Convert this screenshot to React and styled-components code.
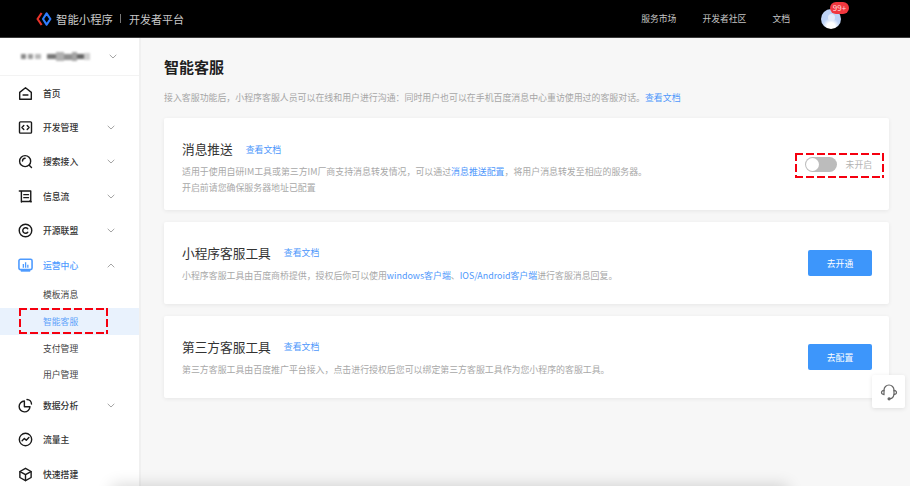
import React from 'react'
import styled, { createGlobalStyle } from 'styled-components'

const GlobalStyle = createGlobalStyle`
  html, body { margin: 0; padding: 0; height: 100%; overflow: hidden; background: #f7f7f7; }
  body { font-family: "Noto Sans CJK SC", "Liberation Sans", sans-serif; }
  * { box-sizing: border-box; }
`

const Ico = ({ children, color = '#1a1a1a', size = 15 }) => (
  <svg width={size} height={size} viewBox="0 0 16 16" fill="none" stroke={color} strokeWidth="1.5" strokeLinecap="round" strokeLinejoin="round">
    {children}
  </svg>
)

const Chevron = ({ up }) => (
  <svg width="8" height="5" viewBox="0 0 8 5" fill="none" stroke="#9a9a9a" strokeWidth="0.9">
    <path d={up ? 'M0.7 4.3 4 1l3.3 3.3' : 'M0.7 0.8 4 4l3.3-3.2'} />
  </svg>
)

const icons = {
  home: <><path d="M1.8 6.8 8 1.8l6.2 5v7.4H1.8z" /><path d="M5.4 9.6h5.2" /></>,
  dev: <><rect x="1.6" y="2" width="12.8" height="12" rx="1" /><path d="M6.2 5.8 4.2 8l2 2.2M9.8 5.8l2 2.2-2 2.2" /></>,
  search: <><circle cx="7.6" cy="7.6" r="5.9" /><path d="M4.8 7.4A2.9 2.9 0 0 1 7.6 4.6M12 12l2.4 2.4" /></>,
  feed: <><path d="M1.4 2.2h2.2v11.6M3.6 2.2h10v11.4" /><path d="M6.2 6h5M6.2 9.2h5M3.8 13.4h8.6" /><path d="M12.8 12.4l1.2 1.2" /></>,
  union: <><circle cx="8" cy="8" r="6.7" /><path d="M10.4 6.1A3 3 0 1 0 10.4 9.9" /></>,
  data: <><path d="M6.8 3.2a5.8 5.8 0 1 0 6 6.2H6.8z" /><path d="M9.6 1.6a5 5 0 0 1 4.8 4.8" /></>,
  flow: <><circle cx="8" cy="8" r="6.6" /><path d="M4.4 9.4 6.8 6.8l2 2 2.8-3" /></>,
  box: <><path d="M8 1.4 14 4.8v6.4L8 14.6l-6-3.4V4.8z" /><path d="M2.2 5 8 8.2 13.8 5M8 8.2v6.2" /></>
}

const OpsIcon = () => (
  <svg width="15" height="15" viewBox="0 0 16 16">
    <rect x="1" y="1.4" width="14" height="11" rx="1.6" fill="none" stroke="#4e9bff" strokeWidth="1.7" />
    <path d="M3 12h10v2.6H3z" fill="#4e9bff" />
    <path d="M5 6.4h1.4v4H5zM7.4 4.6h1.4v5.8H7.4zM9.8 7.2h1.4v3.2H9.8z" fill="#4e9bff" />
  </svg>
)

const navTop = [
  { key: 'home', label: '首页' },
  { key: 'dev', label: '开发管理', arrow: true },
  { key: 'search', label: '搜索接入', arrow: true },
  { key: 'feed', label: '信息流', arrow: true },
  { key: 'union', label: '开源联盟', arrow: true }
]

const subItems = [
  { label: '模板消息', h: 27 },
  { label: '智能客服', h: 27, active: true },
  { label: '支付管理', h: 27 },
  { label: '用户管理', h: 26 }
]

const navBottom = [
  { key: 'data', label: '数据分析', arrow: true },
  { key: 'flow', label: '流量主' },
  { key: 'box', label: '快速搭建' }
]

const blurBlocks = [
  [5, 5, '#8a8a8a'], [2, 0, 'transparent'], [5, 5, '#9c9c9c'], [2, 0, 'transparent'], [6, 5, '#b8b8b8'],
  [6, 0, 'transparent'], [9, 5, '#777'], [8, 9, '#b0b0b0'], [8, 6, '#8f8f8f'], [5, 9, '#a4a4a4'], [7, 5, '#666'], [6, 7, '#cfcfcf']
]

const App = () => (
  <Page>
    <GlobalStyle />
    <Header>
      <Brand>
        <svg width="16" height="14" viewBox="0 0 16 14" fill="none">
          <path d="M5.6 1 1.6 7l4 6" stroke="#e8332a" strokeWidth="2.1" />
          <path d="M10.6 1.4 7 7l3.6 5.6L14.4 7z" stroke="#2f7dff" strokeWidth="2.1" strokeLinejoin="round" />
        </svg>
        <BrandName>智能小程序</BrandName>
        <BrandDivider />
        <BrandSub>开发者平台</BrandSub>
      </Brand>
      <TopNav>
        <TopLink>服务市场</TopLink>
        <TopLink>开发者社区</TopLink>
        <TopLink>文档</TopLink>
        <Avatar>
          <AvatarHead />
          <Badge>99+</Badge>
        </Avatar>
      </TopNav>
    </Header>
    <Body>
      <Sidebar>
        <Account>
          <BlurName>
            {blurBlocks.map(([w, h, c], i) => <BlurBlock key={i} $w={w} $h={h} $c={c} />)}
          </BlurName>
          <Chevron />
        </Account>
        <NavList>
          {navTop.map(item => (
            <NavRow key={item.key}>
              <Ico>{icons[item.key]}</Ico>
              <NavLabel>{item.label}</NavLabel>
              {item.arrow && <Chevron />}
            </NavRow>
          ))}
          <NavRow>
            <OpsIcon />
            <NavLabel $blue>运营中心</NavLabel>
            <Chevron up />
          </NavRow>
          <SubList>
            {subItems.map(item => (
              <SubRow key={item.label} $active={item.active} $h={item.h}>{item.label}</SubRow>
            ))}
          </SubList>
          {navBottom.map(item => (
            <NavRow key={item.key}>
              <Ico>{icons[item.key]}</Ico>
              <NavLabel>{item.label}</NavLabel>
              {item.arrow && <Chevron />}
            </NavRow>
          ))}
        </NavList>
        <ScrollThumb />
      </Sidebar>
      <Main>
        <PageTitle>智能客服</PageTitle>
        <Intro>
          接入客服功能后，小程序客服人员可以在线和用户进行沟通：同时用户也可以在手机百度消息中心重访使用过的客服对话。<Link>查看文档</Link>
        </Intro>
        <Card $h={92} $top={6}>
          <CardText>
            <CardHead>
              <CardTitle>消息推送</CardTitle>
              <Link>查看文档</Link>
            </CardHead>
            <CardDesc>
              适用于使用自研IM工具或第三方IM厂商支持消息转发情况，可以通过<Link>消息推送配置</Link>，将用户消息转发至相应的服务器。
            </CardDesc>
            <CardDesc>开启前请您确保服务器地址已配置</CardDesc>
          </CardText>
          <SwitchWrap>
            <Switch><Knob /></Switch>
            <SwitchLabel>未开启</SwitchLabel>
          </SwitchWrap>
        </Card>
        <Card $h={82}>
          <CardText>
            <CardHead>
              <CardTitle>小程序客服工具</CardTitle>
              <Link>查看文档</Link>
            </CardHead>
            <CardDesc>
              小程序客服工具由百度商桥提供，授权后你可以使用<Link>windows客户端</Link>、<Link>IOS/Android客户端</Link>进行客服消息回复。
            </CardDesc>
          </CardText>
          <PrimaryButton>去开通</PrimaryButton>
        </Card>
        <Card $h={82}>
          <CardText>
            <CardHead>
              <CardTitle>第三方客服工具</CardTitle>
              <Link>查看文档</Link>
            </CardHead>
            <CardDesc>
              第三方客服工具由百度推广平台接入，点击进行授权后您可以绑定第三方客服工具作为您小程序的客服工具。
            </CardDesc>
          </CardText>
          <PrimaryButton>去配置</PrimaryButton>
        </Card>
        <HelpButton>
          <svg width="18" height="18" viewBox="0 0 17 17" fill="none" stroke="#666" strokeWidth="1.1" strokeLinecap="round">
            <path d="M3.8 7.4V6.6a4.7 4.7 0 0 1 9.4 0v.8" />
            <path d="M3.8 7C2.4 7.2 1.4 8 1.4 9s1 1.8 2.4 2zM13.2 7c1.4.2 2.4 1 2.4 2s-1 1.8-2.4 2z" />
            <path d="M13 11.2c-.2 2-1.6 3.4-3.6 3.6" />
            <circle cx="8.6" cy="14.9" r="1" fill="#666" />
          </svg>
        </HelpButton>
      </Main>
      <BottomGlow />
      <MarkSide />
      <MarkSwitch />
    </Body>
  </Page>
)

export default App

const Page = styled.div`
  display: flex;
  flex-direction: column;
  width: 100%;
  height: 100vh;
  overflow: hidden;
`

const Header = styled.header`
  flex: none;
  height: 38px;
  background: #000;
  border-bottom: 1px solid #3a3a3a;
  display: flex;
  align-items: center;
  justify-content: space-between;
  padding-left: 36px;
`

const Brand = styled.div`
  display: flex;
  align-items: center;
`

const BrandName = styled.span`
  margin-left: 4px;
  font-size: 11.4px;
  color: #c9c9c9;
`

const BrandDivider = styled.i`
  width: 1px;
  height: 9px;
  margin: 0 8px 0 7px;
  background: #777;
`

const BrandSub = styled.span`
  font-size: 11px;
  color: #c9c9c9;
`

const TopNav = styled.nav`
  display: flex;
  align-items: center;
  padding-right: 69px;
`

const TopLink = styled.a`
  margin-right: 26px;
  font-size: 8.8px;
  color: #c4c4c4;
`

const Avatar = styled.div`
  position: relative;
  width: 20px;
  height: 20px;
  margin-left: 5px;
  border-radius: 50%;
  background: radial-gradient(circle at 50% 88%, #fff 0 20%, #bed3f6 42%);
`

const AvatarHead = styled.div`
  width: 7px;
  height: 7px;
  margin: 5px auto 0;
  border-radius: 50%;
  background: #e4ecfa;
`

const Badge = styled.span`
  position: absolute;
  left: 9px;
  top: -7px;
  width: 19px;
  height: 12px;
  border-radius: 6px;
  background: #f2373f;
  color: #ffd9d9;
  font-size: 8px;
  line-height: 12px;
  text-align: center;
`

const Body = styled.div`
  position: relative;
  flex: 1;
  min-height: 0;
  display: flex;
`

const Sidebar = styled.aside`
  position: relative;
  flex: none;
  width: 141px;
  background: #fff;
  border-right: 2px solid #f0f0f0;
  overflow: hidden;
`

const ScrollThumb = styled.div`
  position: absolute;
  right: -2px;
  top: 37px;
  width: 2px;
  height: 330px;
  background: #dedede;
`

const Account = styled.div`
  height: 38px;
  display: flex;
  align-items: center;
  justify-content: space-between;
  padding: 0 22px 0 21px;
  border-bottom: 1px solid #f3f3f3;
`

const BlurName = styled.div`
  display: flex;
  align-items: center;
  filter: blur(1px);
`

const BlurBlock = styled.i`
  display: block;
  width: ${p => p.$w}px;
  height: ${p => p.$h}px;
  background: ${p => p.$c};
`

const NavRow = styled.div`
  height: 34.4px;
  display: flex;
  align-items: center;
  padding: 0 24px 0 18px;
`

const NavList = styled.div``

const NavLabel = styled.span`
  flex: 1;
  margin-left: 10px;
  font-size: 8.8px;
  font-weight: 500;
  color: ${p => (p.$blue ? '#4e9bff' : '#333')};
`

const SubList = styled.div`
  margin-top: -1px;
`

const SubRow = styled.div`
  height: ${p => p.$h}px;
  line-height: ${p => p.$h}px;
  padding-left: 43px;
  font-size: 8.8px;
  color: ${p => (p.$active ? '#5ea3fb' : '#444')};
  background: ${p => (p.$active ? '#e9f2fd' : 'transparent')};
`

const Main = styled.main`
  position: relative;
  flex: 1;
  min-width: 0;
  padding: 17px 21px 0 23px;
  background: #f7f7f7;
`

const PageTitle = styled.h1`
  margin: 0;
  height: 24px;
  font-size: 15px;
  line-height: 24px;
  font-weight: 700;
  color: #1f1f1f;
`

const Intro = styled.p`
  margin: 13px 0 0;
  height: 26px;
  font-size: 8.91px;
  line-height: 12px;
  color: #a6a6a6;
`

const Link = styled.a`
  color: #4e97fb;
`

const Card = styled.section`
  height: ${p => p.$h}px;
  margin-bottom: 12px;
  display: flex;
  align-items: center;
  justify-content: space-between;
  padding: ${p => p.$top || 0}px 17px 0 18px;
  background: #fff;
  border-radius: 2px;
  box-shadow: 0 1px 4px rgba(0, 0, 0, 0.07);
`

const CardText = styled.div`
  display: flex;
  flex-direction: column;
`

const CardHead = styled.div`
  display: flex;
  align-items: center;
  gap: 13px;
  font-size: 8.9px;
  margin-bottom: 5px;
`

const CardTitle = styled.h2`
  margin: 0;
  font-size: 12.7px;
  line-height: 20px;
  font-weight: 400;
  color: #333;
`

const CardDesc = styled.p`
  margin: 0;
  font-size: 8.92px;
  line-height: 15.5px;
  color: #a8a8a8;
`

const SwitchWrap = styled.div`
  display: flex;
  align-items: center;
  margin-top: -6px;
`

const Switch = styled.div`
  width: 32px;
  height: 15px;
  padding: 1px;
  border-radius: 8px;
  background: #bcbcbc;
`

const Knob = styled.div`
  width: 13px;
  height: 13px;
  border-radius: 50%;
  background: #fff;
`

const SwitchLabel = styled.span`
  margin-left: 9px;
  font-size: 8.8px;
  color: #b3b3b3;
`

const PrimaryButton = styled.button`
  flex: none;
  width: 64px;
  height: 26px;
  border: 0;
  border-radius: 2px;
  background: #3d96fb;
  color: #fff;
  font-family: inherit;
  font-size: 8.8px;
`

const HelpButton = styled.div`
  position: absolute;
  left: 731px;
  top: 337px;
  width: 33px;
  height: 33px;
  display: flex;
  align-items: center;
  justify-content: center;
  background: #fff;
  border-radius: 2px;
  box-shadow: 0 1px 4px rgba(0, 0, 0, 0.1);
`

// the shadow of something sitting just below the fold
const BottomGlow = styled.div`
  position: absolute;
  left: 112px;
  width: 676px;
  top: 100%;
  height: 20px;
  box-shadow: 0 -1px 16px rgba(0, 0, 0, 0.16);
  pointer-events: none;
`

const dashes = (dir, pos, size) => `repeating-linear-gradient(${dir}, #f5000f 0 8px, transparent 8px 11px) ${pos} / ${size} no-repeat`

const Mark = styled.div`
  position: absolute;
  background:
    ${dashes('to right', 'left top', '100% 2px')},
    ${dashes('to right', 'left bottom', '100% 2px')},
    ${dashes('to bottom', 'left top', '2px 100%')},
    ${dashes('to bottom', 'right top', '2px 100%')};
`

const MarkSide = styled(Mark)`
  left: 19px;
  top: 270px;
  width: 89px;
  height: 26px;
`

const MarkSwitch = styled(Mark)`
  left: 795px;
  top: 115px;
  width: 89px;
  height: 25px;
`
